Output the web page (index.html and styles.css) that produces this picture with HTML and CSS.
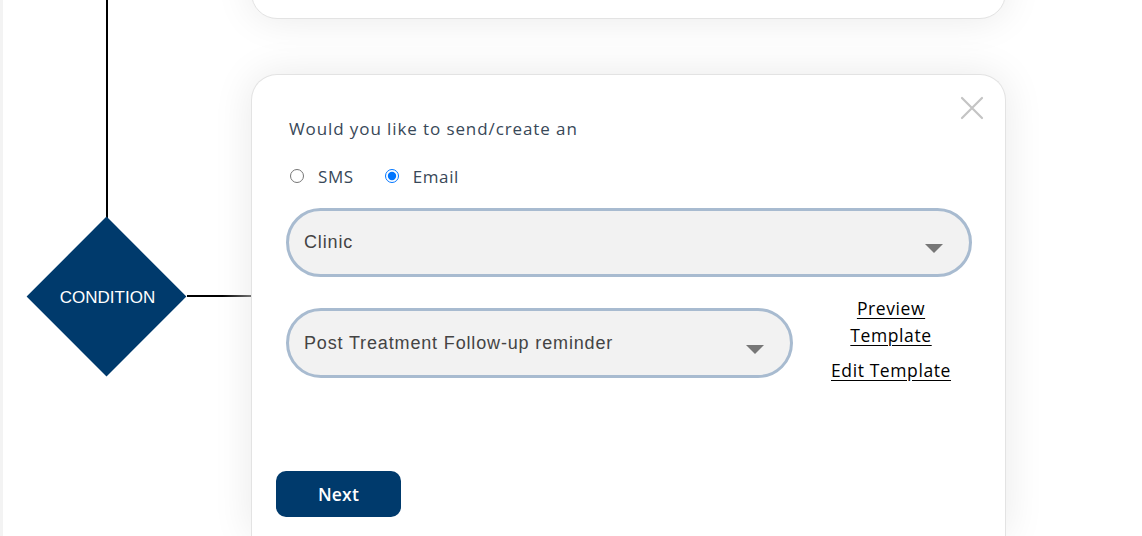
FILE: index.html
```html
<!DOCTYPE html>
<html>
<head>
<meta charset="utf-8">
<link rel="stylesheet" href="styles.css">
</head>
<body>
<div class="page">
  <div class="flow">
    <div class="vline"></div>
    <div class="diamond"><span class="diamond-label">CONDITION</span></div>
    <div class="hline"></div>
  </div>
  <div class="cards">
    <div class="card card-top"></div>
    <div class="card card-main">
      <button class="close" aria-label="Close">
        <svg width="24" height="24" viewBox="0 0 24 24"><path d="M2 2L22 22M22 2L2 22" stroke="#c4c4c4" stroke-width="2.2" fill="none" stroke-linecap="round"/></svg>
      </button>
      <p class="question">Would you like to send/create an</p>
      <div class="radios">
        <label class="radio"><input type="radio" name="kind"><span>SMS</span></label>
        <label class="radio"><input type="radio" name="kind" checked><span>Email</span></label>
      </div>
      <div class="select select-wide">
        <span class="select-text">Clinic</span>
        <span class="caret"></span>
      </div>
      <div class="row">
        <div class="select select-narrow">
          <span class="select-text">Post Treatment Follow-up reminder</span>
          <span class="caret"></span>
        </div>
        <div class="links">
          <a href="#" class="link link-preview">Preview<br>Template</a>
          <a href="#" class="link">Edit Template</a>
        </div>
      </div>
      <button class="next">Next</button>
    </div>
  </div>
</div>
</body>
</html>
```
FILE: styles.css
```css
* { box-sizing: border-box; }
html, body { margin: 0; padding: 0; background: #fff; }
body { width: 1142px; height: 536px; overflow: hidden; font-family: "Open Sans", "Noto Sans", sans-serif; }
.page { display: flex; height: 536px; border-left: 3px solid #f3f3f3; }
.flow { position: relative; width: 248px; flex: none; }
.vline { position: absolute; left: 103px; top: 0; width: 2px; height: 222px; background: #000; }
.diamond { position: absolute; left: 24px; top: 217px; width: 160px; height: 160px; }
.diamond::before { content: ""; position: absolute; left: 23.4px; top: 23.4px; width: 113px; height: 113px; background: #003a6c; transform: rotate(45deg); }
.diamond-label { position: absolute; left: 1px; right: 0; top: 71px; text-align: center; color: #fff; font-family: "Liberation Sans", Arial, sans-serif; font-size: 17px; z-index: 1; }
.hline { position: absolute; left: 184px; top: 295px; width: 64px; height: 2px; background: linear-gradient(90deg, #000 55%, #777 100%); }
.cards { flex: none; width: 755px; display: flex; flex-direction: column; gap: 55px; }
.card { background: #fff; border: 1px solid #e3e3e3; border-radius: 26px; box-shadow: 0 0 40px rgba(0,0,0,0.09); }
.card-top { height: 60px; margin-top: -41px; }
.card-main { position: relative; flex: 1; border-bottom: none; border-bottom-left-radius: 0; border-bottom-right-radius: 0; padding: 42px 34px 0 34px; }
.close { position: absolute; right: 21px; top: 21px; width: 24px; height: 24px; padding: 0; border: none; background: none; }
.close svg { display: block; }
.question { margin: 0 0 0 3px; font-size: 17px; line-height: 24px; color: #384858; letter-spacing: 0.9px; }
.radios { display: flex; gap: 31px; margin: 25px 0 0 4px; height: 20px; align-items: center; }
.radio { display: flex; align-items: center; gap: 14px; font-size: 17px; color: #384858; letter-spacing: 0.6px; }
.radio input { margin: 0; width: 14px; height: 14px; accent-color: #0075ff; }
.select { display: flex; align-items: center; justify-content: space-between; background: #f2f2f2; border: 3px solid #a8bbd0; border-radius: 40px; padding: 0 26px 0 15px; font-family: "Liberation Sans", Arial, sans-serif; font-size: 18px; letter-spacing: 0.85px; color: #444; }
.select-wide { width: 686px; height: 69px; margin-top: 22px; }
.select-narrow { width: 507px; height: 70px; padding-right: 26px; }
.caret { width: 0; height: 0; border-left: 9px solid transparent; border-right: 9px solid transparent; border-top: 9px solid #777; margin-top: 12px; }
.row { display: flex; margin-top: 31px; align-items: flex-start; }
.links { display: flex; flex-direction: column; align-items: center; margin-left: 38px; margin-top: -13px; }
.link { color: #000; font-size: 17.5px; line-height: 27px; letter-spacing: 0.6px; text-align: center; text-decoration: underline; text-underline-offset: 3px; }
.link-preview { margin-bottom: 8px; }
.next { display: block; margin: 87px 0 0 -10px; width: 125px; height: 46px; border: none; border-radius: 10px; background: #003a6c; color: #fff; font-family: "Open Sans", sans-serif; font-weight: 600; font-size: 17.5px; letter-spacing: 0.2px; }
```
